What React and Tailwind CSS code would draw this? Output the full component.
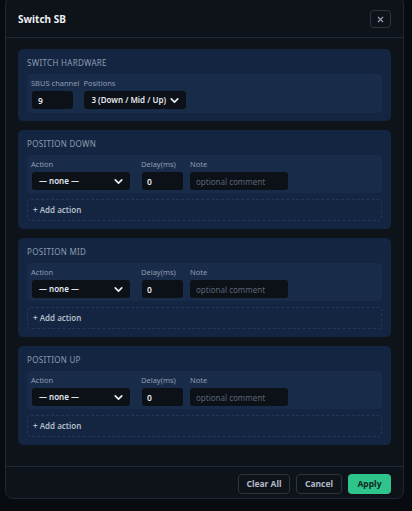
import React, { useState } from 'react';
import { ChevronDown, X } from 'lucide-react';

const font = { fontFamily: "'Noto Sans', 'Liberation Sans', sans-serif" };

const Select = ({ value, width }) => (
  <div className={`flex items-center justify-between h-[18px] rounded-[3px] bg-[#0c1017] pl-[7px] pr-[5px] ${width}`}>
    <span className="text-[8px] font-semibold text-[#e6e9ee] leading-none">{value}</span>
    <ChevronDown size={13} strokeWidth={3.2} className="text-[#e6e9ee]" />
  </div>
);

const PositionSection = ({ title }) => {
  const [delay, setDelay] = useState('0');
  const [note, setNote] = useState('');

  return (
    <div className="rounded-[5px] bg-[#132541] px-[9px] pt-[9px] pb-[8px]">
      <div className="h-[10px] mb-[6px] text-[8px] leading-[10px] tracking-[0.3px] text-[#8f9bb0] uppercase">{title}</div>
      <div className="rounded-[4px] bg-[#182b49] px-[5px] pt-[4px] pb-[3px] flex">
        <div className="flex flex-col w-[98px]">
          <label className="h-[10px] mb-[3px] -ml-px text-[7.5px] leading-[10px] text-[#8f9bb0]">Action</label>
          <Select value="— none —" width="w-[98px]" />
        </div>
        <div className="flex flex-col ml-[12px]">
          <label className="h-[10px] mb-[3px] -ml-px text-[7.5px] leading-[10px] text-[#8f9bb0]">Delay(ms)</label>
          <input
            value={delay}
            onChange={(e) => setDelay(e.target.value)}
            className="w-[41px] h-[18px] rounded-[3px] bg-[#0c1017] px-[5px] text-[8.5px] font-semibold text-[#e6e9ee] outline-none"
          />
        </div>
        <div className="flex flex-col ml-[7px]">
          <label className="h-[10px] mb-[3px] text-[7.5px] leading-[10px] text-[#8f9bb0]">Note</label>
          <input
            value={note}
            onChange={(e) => setNote(e.target.value)}
            placeholder="optional comment"
            className="w-[98px] h-[18px] rounded-[3px] bg-[#0c1017] px-[6px] text-[8px] text-[#e6e9ee] placeholder:text-[#5b6576] outline-none"
          />
        </div>
      </div>
      <div className="mt-[6px] h-[22px] rounded-[4px] border border-dashed border-[#25365a] flex items-center px-[5px]">
        <span className="text-[8px] font-semibold text-[#b4bcc9]">+ Add action</span>
      </div>
    </div>
  );
};

export default function App() {
  const [channel, setChannel] = useState('9');

  return (
    <div className="w-[412px] h-[511px] overflow-hidden bg-[#080b10]" style={font}>
      <div className="ml-[5px] -mt-[4px] w-[399px] h-[503px] rounded-[8px] border border-[#1d2735] bg-[#0e1219] flex flex-col">
        {/* header */}
        <div className="h-[41px] pt-[4px] flex items-center justify-between pl-[12px] pr-[12px] border-b border-[#1d2a3b]">
          <span className="text-[10px] font-bold text-[#eef1f5]">Switch SB</span>
          <button className="w-[21px] h-[18px] rounded-[4px] border border-[#2a3443] flex items-center justify-center text-[#9aa3b1]">
            <X size={9} strokeWidth={3} />
          </button>
        </div>

        {/* body */}
        <div className="flex-1 px-[12px] pt-[11px] flex flex-col gap-[9px]">
          <div className="rounded-[5px] bg-[#132541] px-[9px] pt-[9px] pb-[8px]">
            <div className="h-[10px] mb-[6px] text-[8px] leading-[10px] tracking-[0.3px] text-[#8f9bb0] uppercase">Switch Hardware</div>
            <div className="rounded-[4px] bg-[#182b49] px-[5px] pt-[4px] pb-[4px] flex gap-[5px]">
              <div className="flex flex-col">
                <label className="h-[10px] mb-[3px] -ml-px text-[7.5px] leading-[10px] text-[#8f9bb0]">SBUS channel</label>
                <input
                  value={channel}
                  onChange={(e) => setChannel(e.target.value)}
                  className="w-[41px] h-[18px] rounded-[3px] bg-[#0c1017] px-[6px] text-[8.5px] font-semibold text-[#e6e9ee] outline-none"
                />
              </div>
              <div className="flex flex-col">
                <label className="h-[10px] mb-[3px] -ml-px text-[7.5px] leading-[10px] text-[#8f9bb0]">Positions</label>
                <Select value="3 (Down / Mid / Up)" width="w-[102px]" />
              </div>
            </div>
          </div>

          <PositionSection title="Position Down" />
          <PositionSection title="Position Mid" />
          <PositionSection title="Position Up" />
        </div>

        {/* footer */}
        <div className="h-[32px] border-t border-[#1d2a3b] flex justify-end items-start pt-[7px] pr-[12px] gap-[6px]">
          <button className="w-[52px] h-[20px] rounded-[4px] border border-[#2a3443] text-[8.5px] font-bold text-[#b3bac5]">Clear All</button>
          <button className="w-[46px] h-[20px] rounded-[4px] border border-[#2a3443] text-[8.5px] font-bold text-[#b3bac5]">Cancel</button>
          <button className="w-[43px] h-[20px] rounded-[4px] bg-[#2fc48b] text-[8.5px] font-bold text-[#0f2a1f]">Apply</button>
        </div>
      </div>
    </div>
  );
}
